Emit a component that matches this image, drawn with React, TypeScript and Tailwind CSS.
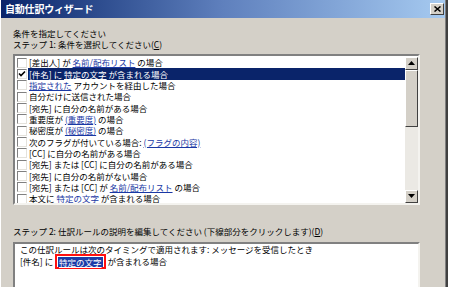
import React from 'react';

const FONT = "font-['Noto_Sans_CJK_JP','Liberation_Sans',sans-serif]";

type Part = string | { link: string };

const rows: Part[][] = [
  ['[差出人] が ', { link: '名前/配布リスト' }, ' の場合'],
  ['[件名] に ', { link: '特定の文字' }, ' が含まれる場合'],
  [{ link: '指定された' }, ' アカウントを経由した場合'],
  ['自分だけに送信された場合'],
  ['[宛先] に自分の名前がある場合'],
  ['重要度が ', { link: '(重要度)' }, ' の場合'],
  ['秘密度が ', { link: '(秘密度)' }, ' の場合'],
  ['次のフラグが付いている場合: ', { link: '(フラグの内容)' }],
  ['[CC] に自分の名前がある場合'],
  ['[宛先] または [CC] に自分の名前がある場合'],
  ['[宛先] に自分の名前がない場合'],
  ['[宛先] または [CC] が ', { link: '名前/配布リスト' }, ' の場合'],
  ['本文に ', { link: '特定の文字' }, ' が含まれる場合'],
];

function Checkbox({ checked }: { checked?: boolean }) {
  return (
    <span className="w-[10px] h-[10px] shrink-0 bg-white border border-t-[#808080] border-l-[#808080] border-b-[#e4e2dc] border-r-[#e4e2dc] flex items-center justify-center">
      {checked && (
        <svg width="8" height="8" viewBox="0 0 8 8">
          <path d="M1 3.5 L3 5.5 L7 1.5" stroke="#000" strokeWidth="1.6" fill="none" />
        </svg>
      )}
    </span>
  );
}

function Arrow({ up }: { up?: boolean }) {
  return (
    <svg width="7" height="5" viewBox="0 0 7 5">
      <path d={up ? 'M0 4 L3.5 0 L7 4 Z' : 'M0 0 L7 0 L3.5 4 Z'} fill="#000" />
    </svg>
  );
}

function ScrollButton({ up }: { up?: boolean }) {
  return (
    <div className="h-[13px] bg-[#d4d0c8] border border-t-white border-l-white border-b-[#404040] border-r-[#404040] flex items-center justify-center">
      <Arrow up={up} />
    </div>
  );
}

export default function App() {
  return (
    <div className={`w-[450px] h-[287px] overflow-hidden flex bg-white ${FONT}`}>
      <div className="w-[445px] h-full flex flex-col bg-[#d4d0c8] border-l border-white">
        {/* title bar */}
        <div className="h-[18px] shrink-0 flex items-center pl-[4px] pr-[1px] bg-gradient-to-r from-[#0a246a] via-[#5f80bd] to-[#a6caf0]">
          <span className="text-white font-bold text-[10px] leading-none tracking-[-0.2px]">自動仕訳ウィザード</span>
          <div className="ml-auto w-[14px] h-[12px] bg-[#d4d0c8] border border-t-white border-l-white border-b-[#404040] border-r-[#404040] flex items-center justify-center">
            <svg width="7" height="6" viewBox="0 0 7 6">
              <path d="M0.5 0.5 L6.5 5.5 M6.5 0.5 L0.5 5.5" stroke="#000" strokeWidth="1.5" />
            </svg>
          </div>
        </div>

        <div className="flex-1 flex flex-col pl-[12px] pt-[10px] text-[8.5px] text-black">
          <div className="leading-[11px] h-[11px]">条件を指定してください</div>
          <div className="leading-[11px] h-[11px]">
            ステップ 1: 条件を選択してください(<span className="underline">C</span>)
          </div>

          {/* condition list */}
          <div className="mt-[4px] w-[407px] h-[151px] shrink-0 border-2 border-t-[#808080] border-l-[#808080] border-b-[#f4f3ef] border-r-[#f4f3ef] bg-white flex">
            <div className="flex-1 flex flex-col overflow-hidden pt-[1px]">
              {rows.map((parts, i) => {
                const sel = i === 1;
                return (
                  <div key={i} className="h-[11.33px] shrink-0 flex items-center pl-[2px]">
                    <Checkbox checked={sel} />
                    <span
                      className={`flex-1 h-full ml-[1px] pl-[1px] flex items-center whitespace-pre leading-none ${
                        sel ? 'bg-[#0a246a] text-white' : ''
                      }`}
                    >
                      {parts.map((p, j) =>
                        typeof p === 'string' ? (
                          <span key={j}>{p}</span>
                        ) : (
                          <span key={j} className={`underline ${sel ? 'text-white' : 'text-[#1a38a4]'}`}>
                            {p.link}
                          </span>
                        ),
                      )}
                    </span>
                  </div>
                );
              })}
            </div>
            {/* scrollbar */}
            <div className="w-[13px] shrink-0 flex flex-col pt-[1px]">
              <ScrollButton up />
              <div className="h-[57px] bg-[#d4d0c8] border border-t-white border-l-white border-b-[#404040] border-r-[#404040]" />
              <div className="flex-1 bg-[#ebe9e4]" />
              <ScrollButton />
            </div>
          </div>

          <div className="mt-[21px] leading-[11px] h-[11px]">
            ステップ 2: 仕訳ルールの説明を編集してください (下線部分をクリックします)(<span className="underline">D</span>)
          </div>

          {/* description box */}
          <div className="mt-[5px] w-[407px] flex-1 border-2 border-b-0 border-t-[#808080] border-l-[#808080] border-r-[#f4f3ef] bg-white pl-[5px]">
            <div className="leading-[10px] h-[10px]">この仕訳ルールは次のタイミングで適用されます: メッセージを受信したとき</div>
            <div className="h-[15px] flex items-center whitespace-pre">
              <span>[件名] に </span>
              <span className="border-2 border-[#ff1010] px-[1px] h-[15px] flex items-center">
                <span className="bg-[#1c3ca8] text-white underline leading-[10px] px-[1px]">特定の文字</span>
              </span>
              <span> が含まれる場合</span>
            </div>
          </div>
        </div>
      </div>
      <div className="w-[1px] h-full bg-[#808080]" />
      <div className="w-[2px] h-full bg-[#404040]" />
      <div className="w-[2px] h-full bg-white" />
    </div>
  );
}
